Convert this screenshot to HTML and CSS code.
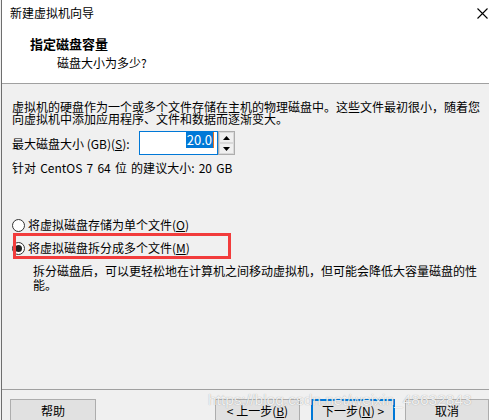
FILE: index.html
```html
<!DOCTYPE html>
<html lang="zh-CN">
<head>
<meta charset="utf-8">
<title>新建虚拟机向导</title>
<link rel="stylesheet" href="styles.css">
</head>
<body>
<div class="window">
  <div class="head">
    <div class="titlebar">
      <span class="title">新建虚拟机向导</span>
      <svg class="close" width="11" height="11" viewBox="0 0 11 11"><path d="M0.5 0.5 L10.5 10.5 M10.5 0.5 L0.5 10.5" stroke="#000" stroke-width="1.1" fill="none"/></svg>
    </div>
    <div class="head-title">指定磁盘容量</div>
    <div class="head-sub">磁盘大小为多少?</div>
  </div>

  <div class="content">
    <p class="desc">虚拟机的硬盘作为一个或多个文件存储在主机的物理磁盘中。这些文件最初很小，随着您<br>向虚拟机中添加应用程序、文件和数据而逐渐变大。</p>

    <div class="size-row">
      <span class="size-label">最大磁盘大小 (GB)(<u>S</u>):</span>
      <span class="field"><span class="sel">20.0</span><span class="caret"></span></span>
      <span class="spin">
        <span class="spin-btn"><svg width="7" height="4" viewBox="0 0 7 4"><path d="M3.5 0 L7 4 L0 4 Z" fill="#000"/></svg></span>
        <span class="spin-btn"><svg width="7" height="4" viewBox="0 0 7 4"><path d="M0 0 L7 0 L3.5 4 Z" fill="#000"/></svg></span>
      </span>
    </div>

    <div class="hint">针对 CentOS 7 64 位 的建议大小: 20 GB</div>

    <div class="options">
      <div class="option"><span class="radio"></span><span>将虚拟磁盘存储为单个文件(<u>O</u>)</span></div>
      <div class="option"><span class="radio checked"></span><span>将虚拟磁盘拆分成多个文件(<u>M</u>)</span></div>
      <div class="mark"></div>
    </div>

    <p class="split-desc">拆分磁盘后，可以更轻松地在计算机之间移动虚拟机，但可能会降低大容量磁盘的性<br>能。</p>
  </div>

  <div class="footer">
    <button class="btn help">帮助</button>
    <span class="spacer"></span>
    <button class="btn back">&lt; 上一步(<u>B</u>)</button>
    <button class="btn next">下一步(<u>N</u>) &gt;</button>
    <button class="btn cancel">取消</button>
  </div>

  <div class="watermark">https://blog.csdn.net/weixin_48632843</div>
</div>
</body>
</html>
```

FILE: styles.css
```css
html, body {
  margin: 0;
  padding: 0;
}

body {
  width: 489px;
  height: 420px;
  overflow: hidden;
  background: #f0f0f0;
  font-family: "Noto Sans CJK SC", "Noto Sans", sans-serif;
  font-size: 12px;
  color: #000;
}

.window {
  position: relative;
  margin-left: 1px;
  border-left: 1px solid #6e6e6e;
  height: 420px;
  display: flex;
  flex-direction: column;
}

.head {
  background: #fff;
  height: 84px;
  box-sizing: border-box;
  border-bottom: 1px solid #a0a0a0;
  flex: none;
}

.titlebar {
  height: 26px;
  display: flex;
  align-items: center;
  justify-content: space-between;
  padding-left: 8px;
  padding-right: 1px;
}

.title {
  line-height: 16px;
}

.close {
  display: block;
}

.head-title {
  margin-top: 8px;
  padding-left: 28px;
  font-size: 13px;
  font-weight: bold;
  line-height: 19px;
}

.head-sub {
  padding-left: 55px;
  line-height: 19px;
}

.content {
  flex: 1;
  padding: 17px 0 0 10px;
}

.desc {
  margin: 0;
  line-height: 12px;
  white-space: nowrap;
}

.size-row {
  margin-top: 6px;
  height: 24px;
  display: flex;
  align-items: center;
}

.size-label {
  width: 127px;
  line-height: 16px;
  padding-top: 2px;
}

.field {
  width: 79px;
  height: 24px;
  box-sizing: border-box;
  border: 1px solid #0078d7;
  background: #fff;
  display: flex;
  justify-content: flex-end;
  align-items: flex-start;
  padding: 0 3px 0 0;
}

.sel {
  background: #0078d7;
  color: #fff;
  font-size: 13px;
  line-height: 16px;
  padding: 0 1px;
}

.caret {
  width: 1px;
  height: 16px;
  background: #e07020;
}

.spin {
  width: 17px;
  height: 24px;
  box-sizing: border-box;
  border: 1px solid #adadad;
  display: flex;
  flex-direction: column;
  background: #fff;
}

.spin-btn {
  flex: 1;
  display: flex;
  align-items: center;
  justify-content: center;
  background: #f0f0f0;
  border: 1px solid #d9d9d9;
}

.hint {
  margin-top: 6px;
  line-height: 14px;
  word-spacing: 1.5px;
}

.options {
  position: relative;
  margin-top: 40px;
  display: flex;
  flex-direction: column;
  gap: 3px;
}

.option {
  height: 20px;
  display: flex;
  align-items: center;
  gap: 3px;
  line-height: 16px;
}

.radio {
  width: 13px;
  height: 13px;
  box-sizing: border-box;
  border: 1px solid #333;
  border-radius: 50%;
  background: #fff;
  display: flex;
  align-items: center;
  justify-content: center;
}

.radio.checked::after {
  content: "";
  width: 7px;
  height: 7px;
  border-radius: 50%;
  background: #222;
}

.mark {
  position: absolute;
  left: 1px;
  top: 18px;
  width: 218px;
  height: 26px;
  box-sizing: border-box;
  border: 3px solid #f23c3c;
}

.split-desc {
  margin: 6px 0 0 21px;
  line-height: 14px;
  white-space: nowrap;
}

.footer {
  flex: none;
  height: 31px;
  box-sizing: border-box;
  border-top: 1px solid #a0a0a0;
  padding: 9px 0 0 8px;
  display: flex;
  align-items: flex-start;
}

.spacer {
  flex: 1;
}

.btn {
  height: 23px;
  box-sizing: border-box;
  border: 1px solid #adadad;
  background: #e1e1e1;
  font-family: "Noto Sans CJK SC", "Noto Sans", sans-serif;
  font-size: 12px;
  line-height: 16px;
  color: #000;
  padding: 0;
  flex: none;
}

.help {
  width: 86px;
}

.back {
  width: 85px;
}

.next {
  width: 84px;
  margin-left: 11px;
  border: 2px solid #0078d7;
}

.cancel {
  width: 84px;
  margin-left: 10px;
}

.watermark {
  position: absolute;
  left: 206px;
  top: 391px;
  font-family: "Liberation Sans", sans-serif;
  font-size: 15.5px;
  line-height: 18px;
  color: rgba(255, 255, 255, 0.85);
  text-shadow: 0 0 1px rgba(0, 0, 0, 0.35);
  white-space: nowrap;
  pointer-events: none;
}
```
